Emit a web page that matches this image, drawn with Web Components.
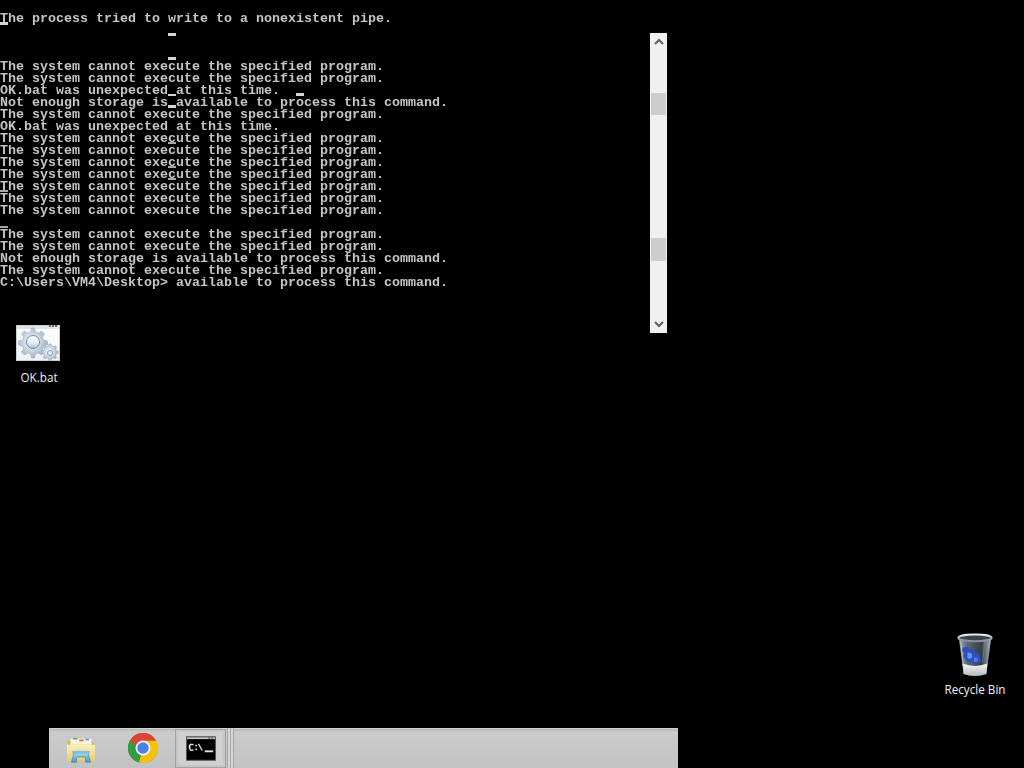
<!DOCTYPE html>
<html><head><meta charset="utf-8"><style>
html,body{margin:0;padding:0;background:#000;overflow:hidden}
</style></head><body>
<win-desktop>
<console-window slot="console">
<con-line>The process tried to write to a nonexistent pipe.</con-line>
<con-line></con-line><con-line></con-line><con-line></con-line>
<con-line>The system cannot execute the specified program.</con-line>
<con-line>The system cannot execute the specified program.</con-line>
<con-line>OK.bat was unexpected at this time.</con-line>
<con-line>Not enough storage is available to process this command.</con-line>
<con-line>The system cannot execute the specified program.</con-line>
<con-line>OK.bat was unexpected at this time.</con-line>
<con-line>The system cannot execute the specified program.</con-line>
<con-line>The system cannot execute the specified program.</con-line>
<con-line>The system cannot execute the specified program.</con-line>
<con-line>The system cannot execute the specified program.</con-line>
<con-line>The system cannot execute the specified program.</con-line>
<con-line>The system cannot execute the specified program.</con-line>
<con-line>The system cannot execute the specified program.</con-line>
<con-line></con-line>
<con-line>The system cannot execute the specified program.</con-line>
<con-line>The system cannot execute the specified program.</con-line>
<con-line>Not enough storage is available to process this command.</con-line>
<con-line>The system cannot execute the specified program.</con-line>
<con-line>C:\Users\VM4\Desktop&gt; available to process this command.</con-line>
</console-window>
<desk-icon slot="icons" label="OK.bat" style="left:0;top:325px;width:78px">
<svg width="44" height="37" viewBox="0 0 44 37" style="margin-right:2px;margin-bottom:3px">
<defs>
<linearGradient id="bat" x1="0" y1="0" x2="0" y2="1"><stop offset="0" stop-color="#fff"/><stop offset="1" stop-color="#eef1f4"/></linearGradient>
<radialGradient id="gear" cx=".45" cy=".45" r=".6"><stop offset="0" stop-color="#f6f9fc"/><stop offset=".5" stop-color="#c9d6e2"/><stop offset="1" stop-color="#9aacbc"/></radialGradient>
<linearGradient id="hole" x1="0" y1="0" x2="0" y2="1"><stop offset="0" stop-color="#ffffff"/><stop offset=".6" stop-color="#e2eef8"/><stop offset="1" stop-color="#8fbbe0"/></linearGradient>
</defs>
<rect x=".5" y=".5" width="43" height="35" fill="url(#bat)" stroke="#c9ced3"/>
<rect x="1" y="1" width="42" height="3" fill="#dfe4e8"/>
<rect x="33" y="0" width="2" height="2" fill="#667"/><rect x="36" y="0" width="2" height="2" fill="#667"/><rect x="39" y="0" width="2" height="2" fill="#667"/>
<g fill="url(#gear)" stroke="#9fb0bf" stroke-width=".6">
<path transform="translate(-2.500 0)" d="M18 3l3 0 1 4 3 1 3-2 3 3-2 3 1 3 4 1 0 4-4 1-1 3 2 3-3 3-3-2-3 1-1 4-3 0-1-4-3-1-3 2-3-3 2-3-1-3-4-1 0-4 4-1 1-3-2-3 3-3 3 2 3-1z"/>
<path transform="translate(2 -2)" d="M31 21l2 0 .6 2 1.8.7 1.8-1 1.4 1.4-1 1.8.7 1.8 2 .6 0 2-2 .6-.7 1.8 1 1.8-1.400 1.400-1.800-1-1.800.7-.6 2-2 0-.6-2-1.800-.7-1.800 1-1.400-1.400 1-1.800-.7-1.800-2-.6 0-2 2-.6.7-1.800-1-1.800 1.400-1.400 1.800 1 1.800-.7z"/>
</g>
<circle cx="17" cy="17" r="6.500" fill="url(#hole)" stroke="#7590aa"/>
<circle cx="34" cy="28" r="2.500" fill="#e8eef3" stroke="#6f7f8f" stroke-width=".7"/>
</svg>
</desk-icon>
<desk-icon slot="icons" label="Recycle Bin" style="left:936px;top:632px;width:78px;gap:3px">
<svg width="38" height="46" viewBox="0 0 40 48">
<defs>
<linearGradient id="bin" x1="0" y1="0" x2="1" y2="0"><stop offset="0" stop-color="#a2acb4"/><stop offset=".25" stop-color="#5d6974"/><stop offset=".7" stop-color="#333d46"/><stop offset="1" stop-color="#b4bdc4"/></linearGradient>
<linearGradient id="rim" x1="0" y1="0" x2="0" y2="1"><stop offset="0" stop-color="#e6ebef"/><stop offset="1" stop-color="#7f8b95"/></linearGradient>
<linearGradient id="base" x1="0" y1="0" x2="0" y2="1"><stop offset="0" stop-color="#f7f8f9"/><stop offset="1" stop-color="#b3babf"/></linearGradient>
</defs>
<path d="M3 6L8 44q12 4 24 0L37 6z" fill="url(#bin)"/>
<path d="M7 33L8 44q12 4 24 0l1-11q-13 5-26 0z" fill="url(#base)"/>
<ellipse cx="20" cy="6" rx="17.500" ry="3.500" fill="#39434c" stroke="url(#rim)" stroke-width="2"/>
<path d="M7 17c3-3 6-2 7 1 3-1 5 1 5 4 4-1 6 1 6 5 3 1 2 5-1 5-3 1-6 1-8-1-3 1-5 0-6-3-3-1-3-4-1-6-3-1-3-3-2-5z" fill="#2b4fc0"/>
<path d="M12 22c3-1 5 0 5 3s-3 4-5 2z" fill="#6e90f4"/>
<path d="M19 27c2-1 4 0 4 2s-2 3-4 2z" fill="#5678e0"/>
<path d="M5 9l3 30" stroke="#d5dde3" stroke-width="1" opacity=".6" fill="none"/>
<path d="M30 10l-2 22" stroke="#aab5bd" stroke-width="1" opacity=".3" fill="none"/>
</svg>
</desk-icon>
<task-bar slot="taskbar">
<task-item w="64">
<svg width="32" height="28" viewBox="0 0 34 32" style="margin-top:4px">
<defs><linearGradient id="fold" x1="0" y1="0" x2="0" y2="1"><stop offset="0" stop-color="#fdf0b8"/><stop offset="1" stop-color="#e9c873"/></linearGradient>
<linearGradient id="dock" x1="0" y1="0" x2="0" y2="1"><stop offset="0" stop-color="#a9dbef"/><stop offset="1" stop-color="#3f96c4"/></linearGradient></defs>
<path d="M2 5h10l2 2h16q2 0 2 2v20H2z" fill="#d9b45e"/>
<rect x="5" y="3" width="24" height="7" fill="#f5f3e4"/>
<rect x="8" y="2" width="5" height="2" fill="#5fb35a"/><rect x="15" y="4" width="5" height="2" fill="#d66b4a"/><rect x="22" y="3" width="4" height="2" fill="#5a9bd6"/>
<path d="M1 10h32v19H1z" fill="url(#fold)"/>
<path d="M9 19h16l3 11h-6v-6H12v6H6z" fill="url(#dock)" stroke="#3c87b0" stroke-width=".7"/>
<rect x="7" y="17" width="20" height="3" fill="#7cc0de"/>
</svg>
</task-item>
<task-item w="60">
<svg width="30" height="30" viewBox="0 0 30 30">
<circle cx="15" cy="15" r="15" fill="#db4437"/>
<path d="M15 15L2 7.500A15 15 0 0 0 11 29.500z" fill="#2f9e44"/>
<path d="M15 15l-4 14.500A15 15 0 0 0 28 7.500z" fill="#f4c20d"/>
<path d="M15 7.500H28A15 15 0 0 1 28 22.500L15 15z" fill="#f4c20d"/>
<path d="M2 7.500A15 15 0 0 1 28 7.500H15a7.500 7.500 0 0 0-7 5z" fill="#db4437"/>
<circle cx="15" cy="15" r="7.500" fill="#f1f1f1"/><circle cx="15" cy="15" r="5.700" fill="#4a80e8"/>
</svg>
</task-item>
<task-item active w="51">
<svg width="30" height="25" viewBox="0 0 32 26">
<rect x=".5" y=".5" width="31" height="25" fill="#000" stroke="#555"/>
<rect x="1" y="1" width="30" height="2" fill="#c8c8c8"/>
<rect x="24" y="1" width="1.500" height="1.500" fill="#444"/><rect x="27" y="1" width="1.500" height="1.500" fill="#444"/>
<g fill="#e4e4e4"><rect x="4" y="8" width="4" height="1.500"/><rect x="3" y="9" width="1.700" height="5"/><rect x="4" y="14" width="4" height="1.500"/>
<rect x="10" y="9" width="1.700" height="1.700"/><rect x="10" y="13" width="1.700" height="1.700"/>
<path d="M14 8l4 7h-1.500l-4-7z"/><rect x="20" y="15" width="9" height="2"/></g>
</svg>
</task-item>
</task-bar>
</win-desktop>
<script>
const def=(name,html)=>customElements.define(name,class extends HTMLElement{
  connectedCallback(){ if(this.shadowRoot) return; const r=this.attachShadow({mode:'open'}); r.innerHTML=typeof html==='function'?html(this):html; }
});
def('win-desktop',`<style>
:host{display:block;position:relative;width:1024px;height:768px;background:#000;overflow:hidden;font-family:"Open Sans","Liberation Sans",sans-serif}
.tb{position:absolute;left:49px;right:346px;bottom:0}
</style><slot name="console"></slot><slot name="icons"></slot><div class="tb"><slot name="taskbar"></slot></div>`);
def('console-window',`<style>
:host{display:grid;grid-template-columns:650px 17px;width:667px;height:333px;position:relative}
.text{padding-top:13px;filter:blur(.3px)}
.bar{margin-top:33px;height:300px;background:#f0f0f0;position:relative;display:flex;flex-direction:column;justify-content:space-between;align-items:center}
.thumb{position:absolute;left:1px;width:15px;background:#cdcdcd}
svg{display:block;margin:5px 0}
.m{position:absolute;background:#d4d4d4;height:2.500px;width:8px}
.t{position:absolute;background:#a8a8a8;height:1.500px;width:8px}
</style>
<div class="text"><slot></slot></div>
<div class="bar">
<svg width="10" height="7" viewBox="0 0 10 7"><path d="M1 6l4-4 4 4" fill="none" stroke="#606060" stroke-width="2"/></svg>
<div class="thumb" style="top:60px;height:22px"></div>
<div class="thumb" style="top:205px;height:23px"></div>
<svg width="10" height="7" viewBox="0 0 10 7"><path d="M1 1l4 4 4-4" fill="none" stroke="#606060" stroke-width="2"/></svg>
</div>
<i class="m" style="left:168px;top:33px"></i><i class="m" style="left:168px;top:57px"></i>
<i class="m" style="left:296px;top:93px"></i><i class="m" style="left:168px;top:93.500px"></i>
<i class="m" style="left:168px;top:105px"></i><i class="t" style="left:168px;top:142px"></i>
<i class="t" style="left:168px;top:166px"></i><i class="t" style="left:168px;top:178px"></i>
<i class="m" style="left:0;top:22px"></i><i class="t" style="left:0;top:190px"></i><i class="t" style="left:0;top:226px"></i>`);
def('con-line',`<style>
:host{display:block;height:12px;font:bold 13.33px/12px "Liberation Mono",monospace;color:#c4c4c4;white-space:pre}
</style><slot></slot>`);
def('desk-icon',t=>`<style>
:host{position:absolute;display:flex;flex-direction:column;align-items:center;gap:4px;color:#f2f2f2;font:11.700px/16px "Open Sans","Liberation Sans",sans-serif}
.i{display:flex;justify-content:center;align-items:flex-end;filter:blur(.35px)}
</style><div class="i"><slot></slot></div><div>${t.getAttribute('label')}</div>`);
def('task-bar',`<style>
:host{display:flex;height:40px;background:linear-gradient(#c2c2c2,#bbb 4%,#cbcbcb 10%,#c2c2c2);box-shadow:inset 0 1px 0 #d2d2d2}
.g{width:7px;height:40px;margin-left:1px;border-left:1px solid #a5a5a5;border-right:1px solid #a5a5a5;box-sizing:border-box;background:linear-gradient(90deg,#d6d6d6,#d6d6d6 2px,#a5a5a5 2px,#a5a5a5 3px,#d6d6d6 3px)}
</style><slot></slot><div class="g"></div>`);
def('task-item',t=>`<style>
:host{display:flex;align-items:center;justify-content:center;width:${t.getAttribute('w')}px;height:40px;box-sizing:border-box;${t.hasAttribute('active')?'height:39px;margin:1px 0 0 2px;padding-bottom:1px;border:1px solid #a2a2a2;background:#d0d0d0;box-shadow:inset 0 0 0 2px #c6c6c6;':''}}
::slotted(svg){display:block;filter:blur(.35px)}
</style><slot></slot>`);
</script>
</body></html>
